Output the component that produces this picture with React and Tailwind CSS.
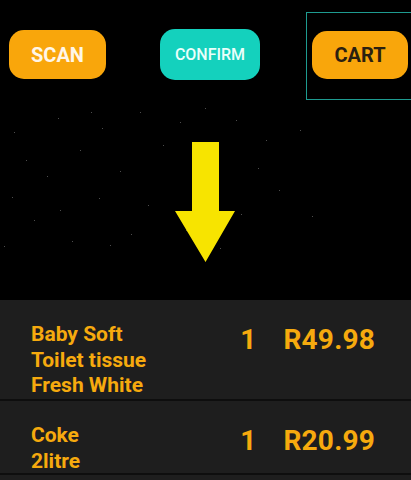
import React from "react";

const stars = [
  [14, 132], [58, 118], [80, 150], [102, 128], [47, 176], [120, 171], [148, 205], [34, 220],
  [99, 198], [163, 145], [131, 234], [72, 241], [236, 120], [258, 168], [279, 190], [241, 214],
  [205, 108], [12, 197], [60, 210], [312, 216], [180, 122], [91, 112], [220, 248], [140, 112],
  [26, 160], [110, 245], [266, 140], [300, 130], [186, 230], [4, 246],
];

function Row({ lines, qty, price, h }) {
  return (
    <div className={`flex ${h} overflow-hidden bg-[#1e1e1e] border-b-2 border-[#0e0e0e] pt-[22px] pl-[31px] pr-[36px]`}>
      <div className="flex-1 text-[21px] leading-[25.7px] font-bold text-[#f6aa0e]">
        {lines.map((l) => (
          <div key={l}>{l}</div>
        ))}
      </div>
      <div className="flex text-[28px] leading-[32px] font-bold text-[#f6aa0e] mt-[2px] tracking-[0.2px]">
        <span className="mr-[27px]">{qty}</span>
        <span>{price}</span>
      </div>
    </div>
  );
}

export default function App() {
  return (
    <div className="w-[411px] h-[480px] bg-black overflow-hidden font-['Roboto',sans-serif] flex flex-col">
      <div className="flex h-[100px] shrink-0 items-start">
        <div className="ml-[9px] mt-[30px] w-[97px] h-[49px] rounded-[15px] bg-[#f9a60b] flex items-center justify-center text-[20px] font-bold text-[#fff6e8]">
          SCAN
        </div>
        <div className="ml-[54px] mt-[29px] w-[100px] h-[51px] rounded-[15px] bg-[#14d1bd] flex items-center justify-center text-[16px] font-medium text-[#eafffb]">
          CONFIRM
        </div>
        <div className="ml-[46px] mt-[12px] w-[105px] h-[88px] border border-r-0 border-[#1e9b90] pl-[5px] pt-[18px]">
          <div className="w-[96px] h-[48px] rounded-[15px] bg-[#f9a60b] flex items-center justify-center text-[20px] font-bold text-[#2b2010]">
            CART
          </div>
        </div>
      </div>
      <div className="relative h-[200px] shrink-0">
        <svg className="absolute inset-0" width="411" height="200" viewBox="0 100 411 200">
          {stars.map(([x, y], i) => (
            <rect key={i} x={x} y={y} width="1" height="1" fill="#ffffff" opacity="0.3" />
          ))}
        </svg>
        <svg className="ml-[175px] mt-[42px] relative" width="61" height="121" viewBox="0 0 61 121">
          <polygon points="17,0 44,0 44,69 60,69 30.5,120 0,69 17,69" fill="#f7e400" />
        </svg>
      </div>
      <Row h="h-[101px]" lines={["Baby Soft", "Toilet tissue", "Fresh White"]} qty="1" price="R49.98" />
      <Row h="h-[74px]" lines={["Coke", "2litre"]} qty="1" price="R20.99" />
      <div className="flex-1 bg-[#1e1e1e]" />
    </div>
  );
}
